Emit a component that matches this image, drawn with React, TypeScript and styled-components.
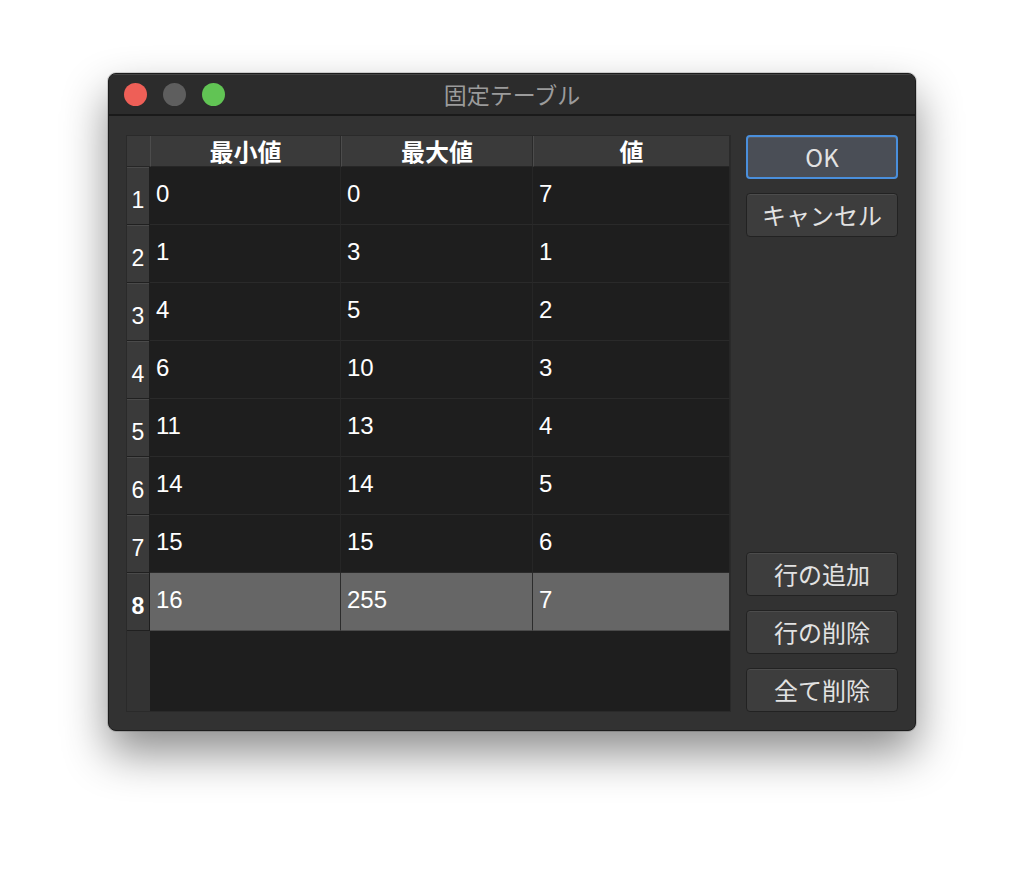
import styled, { createGlobalStyle } from 'styled-components';

const GlobalStyle = createGlobalStyle`
  body {
    margin: 0;
    background: #ffffff;
    font-family: "Liberation Sans", "Noto Sans CJK JP", sans-serif;
  }
`;

const Page = styled.div`
  width: 1024px;
  height: 874px;
  padding: 73px 0 0 108px;
  box-sizing: border-box;
`;

const Window = styled.div`
  width: 808px;
  height: 658px;
  display: flex;
  flex-direction: column;
  background: #323232;
  border: 1px solid #1c1c1c;
  border-radius: 8px;
  box-sizing: border-box;
  overflow: hidden;
  box-shadow: 0 22px 45px rgba(0, 0, 0, 0.45), 0 0 0 1px rgba(0, 0, 0, 0.15);
`;

const TitleBar = styled.div`
  position: relative;
  height: 39px;
  flex-shrink: 0;
  display: flex;
  align-items: center;
  justify-content: center;
  background: #2c2c2c;
  border-top: 1px solid #444;
  border-bottom: 2px solid #1a1a1a;
`;

const Lights = styled.div`
  position: absolute;
  left: 15px;
  top: 8px;
  display: flex;
  gap: 16px;
`;

const Light = styled.span<{ $color: string }>`
  width: 23px;
  height: 23px;
  border-radius: 50%;
  background: ${(p) => p.$color};
`;

const Title = styled.div`
  color: #9b9b9b;
  font-size: 23px;
  font-family: "Noto Sans CJK JP", sans-serif;
  line-height: 1;
`;

const Body = styled.div`
  flex: 1;
  display: flex;
  gap: 15px;
  padding: 19px 17px 18px 17px;
`;

const Table = styled.div`
  width: 605px;
  display: grid;
  grid-template-columns: 23px 191px 192px 1fr;
  grid-template-rows: 31px repeat(8, 58px) 1fr;
  background: #1e1e1e;
  border: 1px solid #2a2a2a;
  box-sizing: border-box;
`;

const Corner = styled.div`
  background: #3a3a3a;
  border-bottom: 1px solid #262626;
`;

const HeadCell = styled.div`
  display: flex;
  align-items: center;
  justify-content: center;
  background: #3a3a3a;
  border-left: 1px solid #4c4c4c;
  border-right: 1px solid #2a2a2a;
  border-bottom: 1px solid #262626;
  color: #fff;
  font-weight: bold;
  font-size: 24px;
  line-height: 1;
  font-family: "Noto Sans CJK JP", sans-serif;
`;

const RowNum = styled.div<{ $active?: boolean }>`
  display: flex;
  align-items: center;
  justify-content: center;
  padding-top: 8px;
  box-sizing: border-box;
  background: #3a3a3a;
  border-top: 1px solid #4a4a4a;
  border-bottom: 1px solid #202020;
  margin-right: 1px;
  color: #fff;
  font-size: 23px;
  font-weight: ${(p) => (p.$active ? 'bold' : 'normal')};
`;

const Cell = styled.div<{ $active?: boolean }>`
  display: flex;
  align-items: center;
  padding: 0 0 3px 6px;
  background: ${(p) => (p.$active ? '#666666' : '#1e1e1e')};
  border-right: 1px solid ${(p) => (p.$active ? '#2c2c2c' : '#262626')};
  border-bottom: 1px solid ${(p) => (p.$active ? '#4a4a4a' : '#2a2a2a')};
  color: #fff;
  font-size: 24px;
`;

const Filler = styled.div`
  background: #1e1e1e;
`;

const FillerNum = styled.div`
  background: #333333;
`;

const Side = styled.div`
  width: 152px;
  display: flex;
  flex-direction: column;
  gap: 14px;
`;

const Spacer = styled.div`
  flex: 1;
`;

const Button = styled.button<{ $primary?: boolean }>`
  height: 44px;
  border-radius: 4px;
  background: ${(p) => (p.$primary ? '#4a4e56' : '#3d3d3d')};
  border: ${(p) => (p.$primary ? '2px solid #4a8fdc' : '1px solid #222')};
  box-shadow: inset 0 1px 0 rgba(255, 255, 255, 0.08);
  color: #e2e2e2;
  font-size: 24px;
  line-height: 1;
  font-family: "Noto Sans CJK JP", sans-serif;
  padding: 0;
`;

const rows = [
  ['0', '0', '7'],
  ['1', '3', '1'],
  ['4', '5', '2'],
  ['6', '10', '3'],
  ['11', '13', '4'],
  ['14', '14', '5'],
  ['15', '15', '6'],
  ['16', '255', '7'],
];

export default function App() {
  return (
    <Page>
      <GlobalStyle />
      <Window>
        <TitleBar>
          <Lights>
            <Light $color="#ee5f57" />
            <Light $color="#5e5e5e" />
            <Light $color="#61c454" />
          </Lights>
          <Title>固定テーブル</Title>
        </TitleBar>
        <Body>
          <Table>
            <Corner />
            <HeadCell>最小値</HeadCell>
            <HeadCell>最大値</HeadCell>
            <HeadCell>値</HeadCell>
            {rows.map((r, i) => {
              const active = i === rows.length - 1;
              return [
                <RowNum key={`n${i}`} $active={active}>
                  {i + 1}
                </RowNum>,
                ...r.map((v, j) => (
                  <Cell key={`c${i}-${j}`} $active={active}>
                    {v}
                  </Cell>
                )),
              ];
            })}
            <FillerNum />
            <Filler />
            <Filler />
            <Filler />
          </Table>
          <Side>
            <Button $primary>OK</Button>
            <Button>キャンセル</Button>
            <Spacer />
            <Button>行の追加</Button>
            <Button>行の削除</Button>
            <Button>全て削除</Button>
          </Side>
        </Body>
      </Window>
    </Page>
  );
}
